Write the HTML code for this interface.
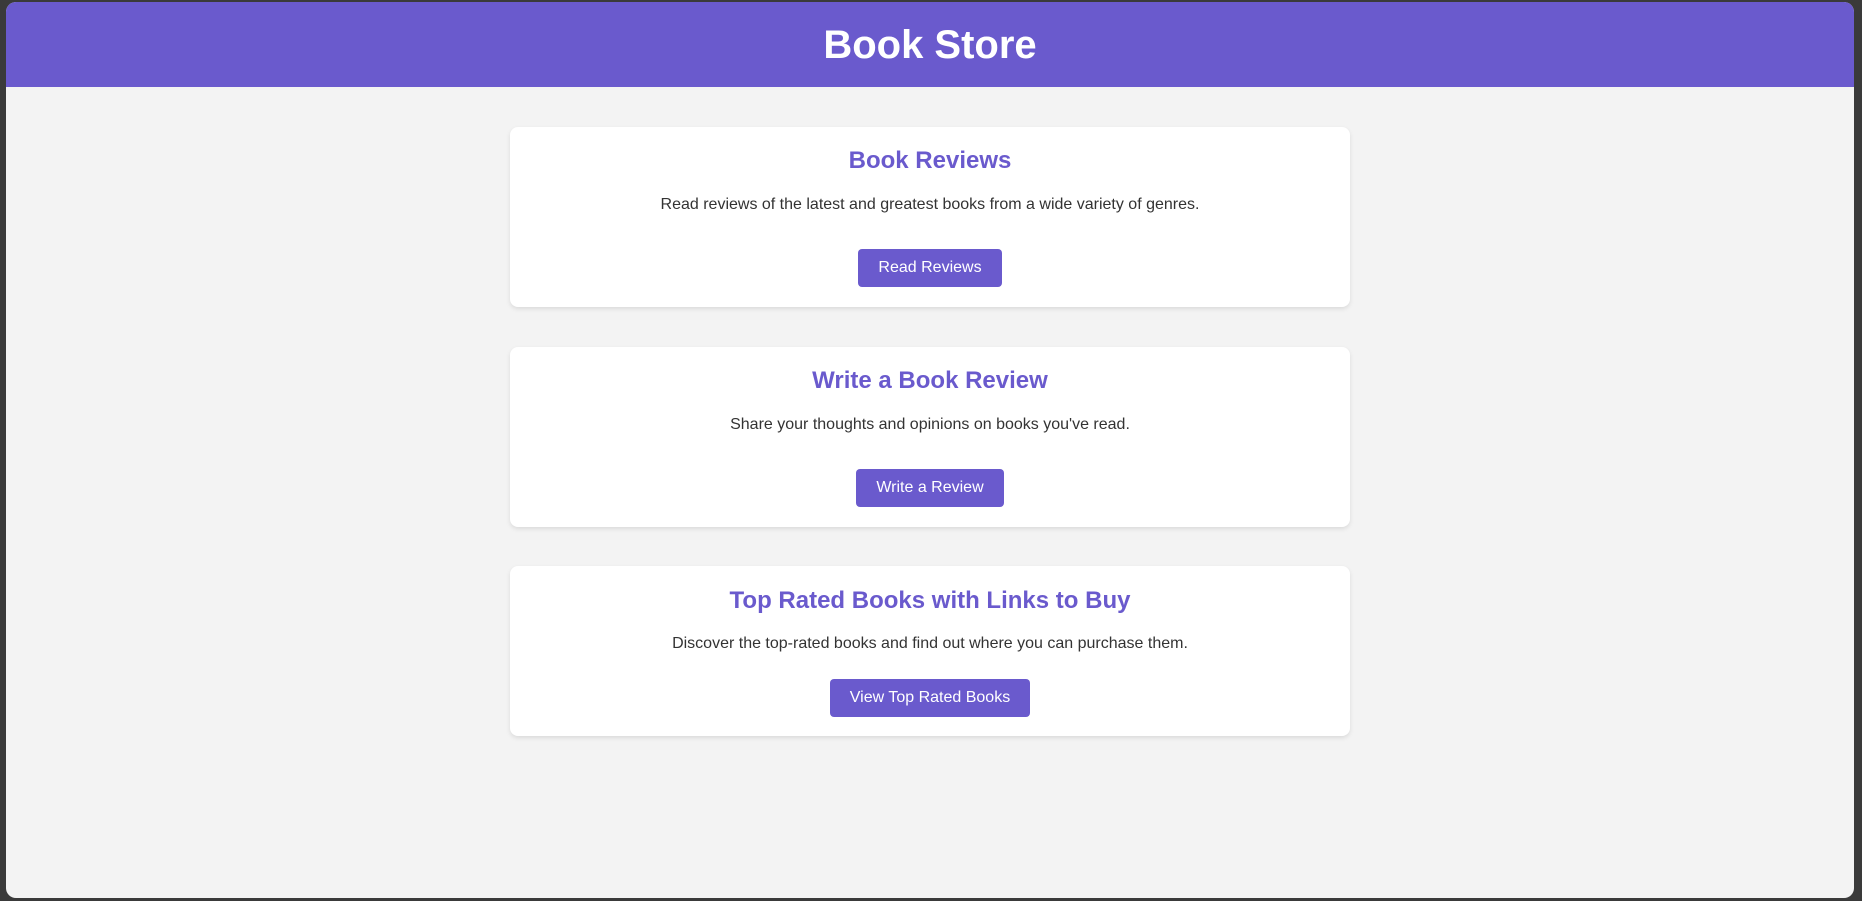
<!DOCTYPE html>
<html><head><meta charset="utf-8"><style>
html,body{margin:0;padding:0;width:1862px;height:901px;background:#3a3a3a;overflow:hidden;font-family:"Liberation Sans",Arial,sans-serif}
.page{position:absolute;left:6px;top:2px;width:1848px;height:896px;background:#f3f3f3;border-radius:10px;overflow:hidden}
.hdr{position:absolute;left:0;top:0;width:100%;height:85px;background:#6a5acd;color:#fff;text-align:center;font-weight:bold;font-size:40px;line-height:87px}
.card{position:absolute;left:504px;width:840px;background:#fff;border-radius:8px;box-shadow:0 2px 5px rgba(0,0,0,0.1)}
.t{position:absolute;left:0;width:100%;text-align:center;color:#6a5acd;font-weight:bold;font-size:24px;line-height:28px}
.p{position:absolute;left:0;width:100%;text-align:center;color:#333;font-size:16px;line-height:20px}
.b{position:absolute;height:38px;background:#6a5acd;color:#fff;border-radius:4px;font-size:16px;line-height:38px;text-align:center}
</style></head><body>
<div class="page">
<div class="hdr">Book Store</div>
<div class="card" style="top:125px;height:180px">
 <div class="t" style="top:20px">Book Reviews</div>
 <div class="p" style="top:68px">Read reviews of the latest and greatest books from a wide variety of genres.</div>
 <div class="b" style="left:348px;width:144px;top:122px">Read Reviews</div>
</div>
<div class="card" style="top:345px;height:180px">
 <div class="t" style="top:20px">Write a Book Review</div>
 <div class="p" style="top:68px">Share your thoughts and opinions on books you've read.</div>
 <div class="b" style="left:346px;width:148px;top:122px">Write a Review</div>
</div>
<div class="card" style="top:564px;height:170px">
 <div class="t" style="top:21px">Top Rated Books with Links to Buy</div>
 <div class="p" style="top:68px">Discover the top-rated books and find out where you can purchase them.</div>
 <div class="b" style="left:320px;width:200px;top:113px">View Top Rated Books</div>
</div>
</div>
</body></html>
